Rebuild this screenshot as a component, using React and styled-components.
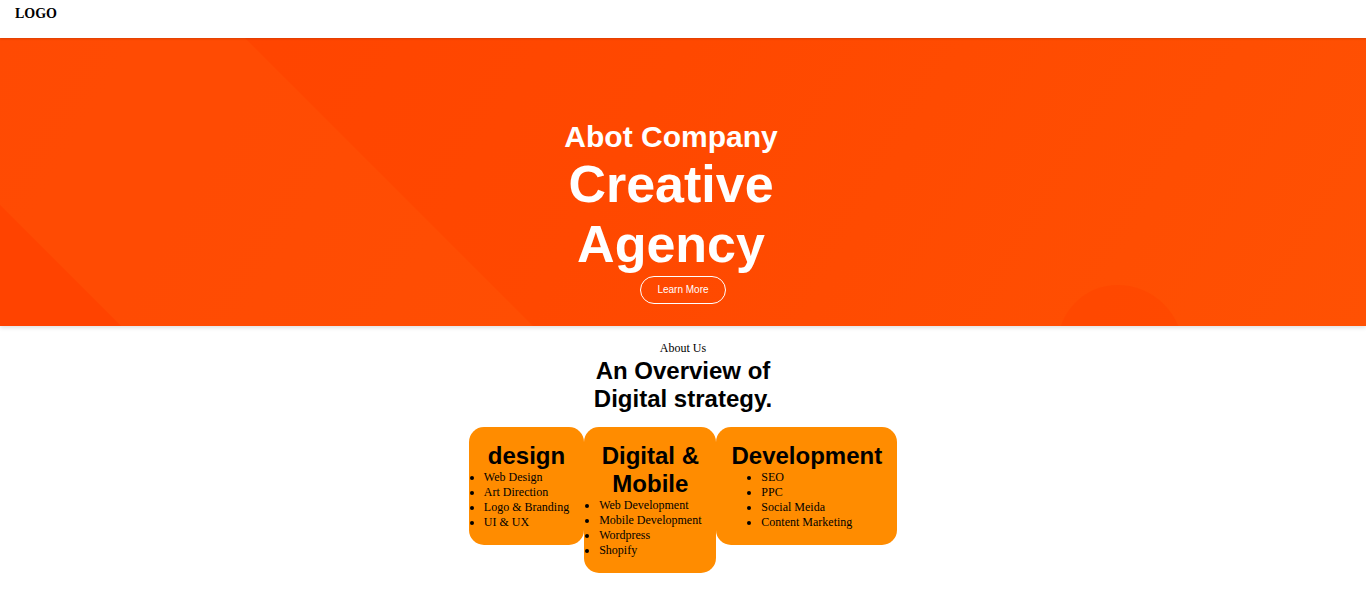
import styled, { createGlobalStyle } from "styled-components";

const GlobalStyle = createGlobalStyle`
    body {
        margin: 0;
        font-family: "Liberation Serif", "Times New Roman", serif;
        background: #fff;
        color: #000;
    }
`;

const Header = styled.header`
    height: 38px;
    box-sizing: border-box;
    padding: 6px 15px 0;
    background: #fff;
    box-shadow: 0 1px 2px rgba(0, 0, 0, 0.15);
    position: relative;
    z-index: 2;

    & .logo {
        font-size: 14px;
        font-weight: 700;
        line-height: 16px;
    }
`;

const Hero = styled.section`
    position: relative;
    overflow: hidden;
    height: 288px;
    box-sizing: border-box;
    padding-top: 82px;
    display: flex;
    justify-content: center;
    background: linear-gradient(120deg, #ff4300 0%, #ff4800 45%, #ff5103 100%);
    box-shadow: 0 2px 4px rgba(0, 0, 0, 0.12);
    z-index: 1;
`;

// decorative background shapes
const Band = styled.div`
    position: absolute;
    left: -400px;
    top: 0;
    width: 645px;
    height: 300px;
    background: rgba(255, 110, 20, 0.16);
    transform: skewX(45deg);
    transform-origin: top left;
`;

const Corner = styled.div`
    position: absolute;
    left: -370px;
    top: 167px;
    width: 370px;
    height: 140px;
    background: #ff4300;
    transform: skewX(45deg);
    transform-origin: top left;
`;

const Blob = styled.div`
    position: absolute;
    left: 1058px;
    top: 247px;
    width: 125px;
    height: 140px;
    border-radius: 60px 66px 0 0;
    background: #ff4700;
    opacity: 0.8;
`;

const HeroContent = styled.div`
    position: relative;
    width: 300px;
    display: flex;
    flex-direction: column;
    align-items: center;
    font-family: "Liberation Sans", Arial, sans-serif;
    color: #fff;
`;

const HeroText = styled.div`
    align-self: stretch;
    padding-right: 24px;
    text-align: center;

    & h3 {
        margin: 0;
        font-size: 30px;
        font-weight: 700;
        line-height: 34px;
    }
    & h1 {
        margin: 0;
        font-size: 52px;
        font-weight: 700;
        line-height: 60px;
    }
`;

const OutlineButton = styled.button`
    margin-top: 2px;
    padding: 7px 16px;
    border: 1px solid #fff;
    border-radius: 14px;
    background: transparent;
    color: #fff;
    font-family: "Liberation Sans", Arial, sans-serif;
    font-size: 10px;
    line-height: 12px;
    cursor: pointer;
`;

const About = styled.section`
    padding-top: 15px;
    display: flex;
    flex-direction: column;
    align-items: center;
    text-align: center;

    & .eyebrow {
        font-size: 12px;
        line-height: 14px;
    }
    & h2 {
        margin: 2px 0 0;
        width: 200px;
        font-family: "Liberation Sans", Arial, sans-serif;
        font-size: 24px;
        font-weight: 700;
        line-height: 28px;
    }
`;

const CardRow = styled.div`
    margin-top: 14px;
    display: flex;
    justify-content: center;
    align-items: flex-start;
`;

const ServiceCard = styled.div`
    width: min-content;
    padding: 15px;
    background: #ff8c00;
    border-radius: 15px;
    text-align: center;

    & h3 {
        margin: 0;
        font-family: "Liberation Sans", Arial, sans-serif;
        font-size: 24px;
        font-weight: 700;
        line-height: 28px;
    }
    & ul {
        margin: 0 auto;
        padding: 0;
        width: fit-content;
        text-align: left;
    }
    & li {
        font-size: 12px;
        line-height: 15px;
        white-space: nowrap;
    }
`;

const services = [
    { title: "design", items: ["Web Design", "Art Direction", "Logo & Branding", "UI & UX"] },
    {
        title: "Digital & Mobile",
        items: ["Web Development", "Mobile Development", "Wordpress", "Shopify"],
    },
    { title: "Development", items: ["SEO", "PPC", "Social Meida", "Content Marketing"] },
];

export default function App() {
    return (
        <>
            <GlobalStyle />
            <Header>
                <div className="logo">LOGO</div>
            </Header>
            <Hero>
                <Band />
                <Corner />
                <Blob />
                <HeroContent>
                    <HeroText>
                        <h3>Abot Company</h3>
                        <h1>Creative Agency</h1>
                    </HeroText>
                    <OutlineButton>Learn More</OutlineButton>
                </HeroContent>
            </Hero>
            <About>
                <div className="eyebrow">About Us</div>
                <h2>An Overview of Digital strategy.</h2>
                <CardRow>
                    {services.map((s) => (
                        <ServiceCard key={s.title}>
                            <h3>{s.title}</h3>
                            <ul>
                                {s.items.map((it) => (
                                    <li key={it}>{it}</li>
                                ))}
                            </ul>
                        </ServiceCard>
                    ))}
                </CardRow>
            </About>
        </>
    );
}
